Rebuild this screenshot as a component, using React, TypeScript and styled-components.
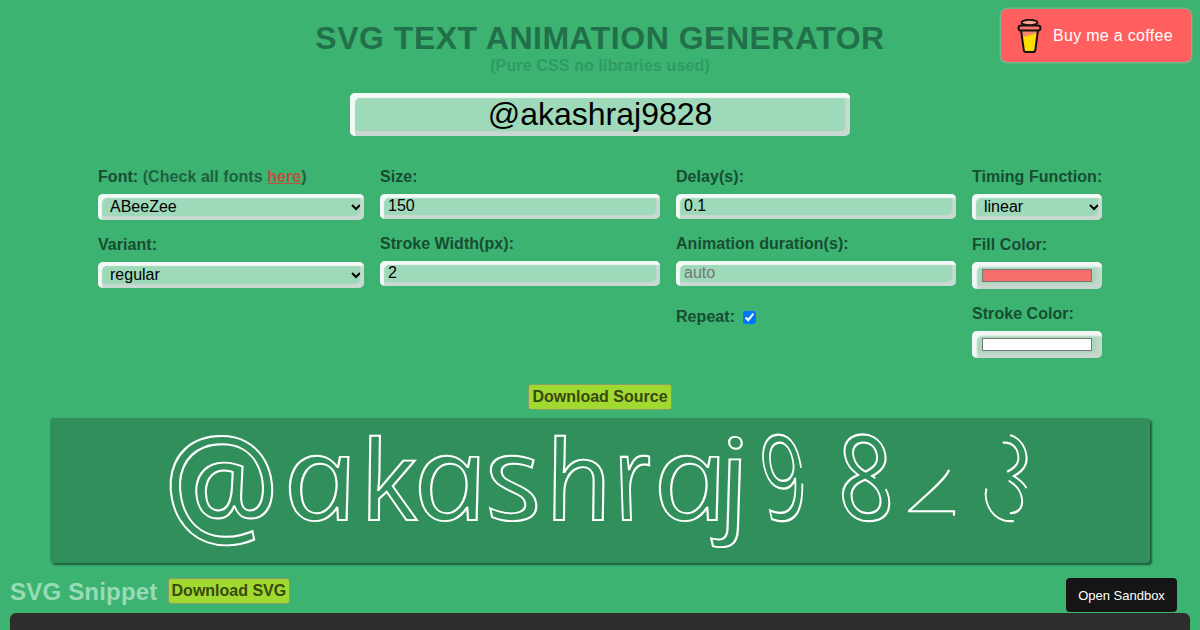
import React from "react";
import styled, { createGlobalStyle } from "styled-components";

const Global = createGlobalStyle`
  html, body { margin: 0; padding: 0; height: 630px; overflow: hidden; background: #3cb371; }
  body { font-family: "Liberation Sans", Arial, sans-serif; }
  * { box-sizing: border-box; }
`;

const Page = styled.div`
  position: relative;
  height: 630px;
  overflow: hidden;
  background: #3cb371;
  display: flex;
  flex-direction: column;
`;

const Header = styled.header`
  padding-top: 20px;
  text-align: center;
`;

const Title = styled.h1`
  margin: 0;
  font-size: 32px;
  line-height: 36px;
  font-weight: 700;
  letter-spacing: 0.5px;
  color: #22704a;
`;

const Subtitle = styled.div`
  margin-top: 1px;
  font-size: 16px;
  line-height: 18px;
  font-weight: 700;
  letter-spacing: 0.13px;
  color: #2f9a62;
`;

const Coffee = styled.a`
  position: absolute;
  top: 9px;
  left: 1001px;
  width: 190px;
  height: 53px;
  display: flex;
  align-items: center;
  gap: 10px;
  padding-left: 16px;
  background: #ff5f5f;
  border-radius: 6px;
  box-shadow: 0 0 0 1.5px rgba(190, 190, 190, 0.4);
  color: #fff;
  font-size: 16px;
  letter-spacing: 0.3px;
`;

const BevelStyle = `
  border: none;
  border-radius: 5px;
  background: #9edab9;
  box-shadow: inset 4px 4px 1px rgba(255, 255, 255, 0.85), inset -4px -4px 1px rgba(220, 215, 218, 0.7);
  font-family: "Liberation Sans", Arial, sans-serif;
  color: #000;
  outline: none;
`;

const MainInput = styled.input`
  ${BevelStyle}
  display: block;
  width: 500px;
  height: 43px;
  margin: 18px auto 0;
  font-size: 32px;
  text-align: center;
  padding: 0 6px;
  box-shadow: inset 5px 5px 1px rgba(255, 255, 255, 0.85), inset -5px -5px 1px rgba(220, 215, 218, 0.7);
`;

const Form = styled.div`
  margin: 32px auto 0;
  width: 1004px;
  display: grid;
  grid-template-columns: 266px 280px 280px 130px;
  column-gap: 16px;
`;

const Column = styled.div`
  display: flex;
  flex-direction: column;
  gap: 16px;
`;

const Field = styled.div`
  display: flex;
  flex-direction: column;
  gap: 8px;
`;

const Label = styled.label`
  font-size: 16px;
  line-height: 18px;
  font-weight: 700;
  color: #174d32;
  letter-spacing: 0.05px;
  white-space: nowrap;
`;

const Muted = styled.span`
  color: #1e6140;
`;

const HereLink = styled.a`
  color: #c0503f;
  text-decoration: underline;
`;

const Select = styled.select`
  ${BevelStyle}
  width: 100%;
  height: 26px;
  font-size: 16px;
  padding: 0 3px 2px 8px;
`;

const TextInput = styled.input`
  ${BevelStyle}
  width: 100%;
  height: 25px;
  font-size: 16px;
  padding: 0 8px 2px;
  &::placeholder { color: #757575; }
`;

const ColorInput = styled.input`
  ${BevelStyle}
  width: 130px;
  height: 27px;
  background: #a9d8bc;
  padding: 7px 10px;
  box-shadow: inset 5px 5px 2px rgba(255, 255, 255, 0.85), inset -5px -5px 3px rgba(220, 215, 218, 0.6);
  &::-webkit-color-swatch-wrapper { padding: 0; }
`;

const RepeatRow = styled.div`
  display: flex;
  align-items: center;
  gap: 8px;
  margin-top: 6px;
`;

const Check = styled.input`
  margin: 0;
  width: 13px;
  height: 13px;
`;

const GreenButton = styled.button`
  font-family: "Liberation Sans", Arial, sans-serif;
  font-size: 16px;
  font-weight: 700;
  color: #38490f;
  background: #a0d92f;
  border: 1px solid #8a9a6a;
  border-radius: 3px;
  padding: 0 3px;
  height: 26px;
  white-space: nowrap;
`;

const SourceRow = styled.div`
  margin-top: 26px;
  display: flex;
  justify-content: center;
`;

const Stage = styled.div`
  margin: 8px auto 0;
  width: 1100px;
  height: 145px;
  background: #318f5c;
  border-radius: 4px;
  box-shadow: 2px 2px 2px #1c5c3a;
`;

const StageSvg = styled.svg`
  display: block;
  overflow: visible;
`;

const SnippetRow = styled.div`
  margin-top: 15px;
  height: 34px;
  padding: 0 23px 0 10px;
  display: flex;
  align-items: flex-start;
  gap: 10px;
`;

const SnippetTitle = styled.h2`
  margin: 0;
  font-size: 24px;
  line-height: 28px;
  font-weight: 700;
  letter-spacing: 0.2px;
  color: #98dcb7;
`;

const Sandbox = styled.button`
  margin-left: auto;
  width: 111px;
  height: 34px;
  background: #151515;
  color: #fff;
  border: none;
  border-radius: 4px;
  font-family: "Liberation Sans", Arial, sans-serif;
  font-size: 13px;
`;

const CodeBlock = styled.div`
  margin: 1px 10px 0;
  flex: 1;
  background: #2d2d2d;
  border-radius: 6px 6px 0 0;
`;

const CupIcon = () => (
  <svg width="26" height="36" viewBox="0 0 26 36" fill="none">
    <path d="M4 13 L7 33 H18 L21 13 Z" fill="#ffdd00" />
    <path d="M4.5 13 L5.5 19 C10 18 14 17 20.3 15 L21 13 Z" fill="#f48a6a" />
    <path d="M4 12 L6.8 32 Q7 34 9 34 H16 Q18 34 18.3 32 L21 12" stroke="#1a1010" strokeWidth="2" />
    <rect x="1.5" y="7.5" width="22" height="5" rx="2.5" fill="#f4756a" stroke="#1a1010" strokeWidth="2" />
    <ellipse cx="12.5" cy="4.5" rx="8" ry="2.6" fill="#f9a58c" stroke="#1a1010" strokeWidth="1.8" />
  </svg>
);

const Glyph = styled.text`
  font-family: "Open Sans", sans-serif;
  font-style: italic;
  font-size: 118px;
  fill: none;
  stroke: #fff;
  stroke-width: 2px;
  vector-effect: non-scaling-stroke;
`;

const chars: { c: string; x: number; sx: number; sy?: number; dash?: string }[] = [
  { c: "a", x: 239, sx: 1.13 },
  { c: "k", x: 316, sx: 1, sy: 0.94 },
  { c: "a", x: 369, sx: 1.13 },
  { c: "s", x: 442, sx: 1.12 },
  { c: "h", x: 501, sx: 1, sy: 0.94 },
  { c: "r", x: 570, sx: 0.85 },
  { c: "a", x: 609, sx: 1.13 },
  { c: "j", x: 674, sx: 1.1, sy: 0.96 },
  { c: "9", x: 718, sx: 0.72, dash: "210 14 170 20" },
  { c: "8", x: 793, sx: 0.88, dash: "190 14 170 14" },
  { c: "2", x: 844, sx: 1.15, dash: "0 228 112 300" },
  { c: "8", x: 936, sx: 0.85, dash: "45 85 70 45 60 70" },
];

export default function App() {
  return (
    <Page>
      <Global />
      <Coffee>
        <CupIcon />
        Buy me a coffee
      </Coffee>
      <Header>
        <Title>SVG TEXT ANIMATION GENERATOR</Title>
        <Subtitle>(Pure CSS no libraries used)</Subtitle>
      </Header>
      <MainInput defaultValue="@akashraj9828" />
      <Form>
        <Column>
          <Field>
            <Label>
              Font: <Muted>(Check all fonts <HereLink>here</HereLink>)</Muted>
            </Label>
            <Select defaultValue="ABeeZee"><option>ABeeZee</option></Select>
          </Field>
          <Field>
            <Label>Variant:</Label>
            <Select defaultValue="regular"><option>regular</option></Select>
          </Field>
        </Column>
        <Column>
          <Field>
            <Label>Size:</Label>
            <TextInput defaultValue="150" />
          </Field>
          <Field>
            <Label>Stroke Width(px):</Label>
            <TextInput defaultValue="2" />
          </Field>
        </Column>
        <Column>
          <Field>
            <Label>Delay(s):</Label>
            <TextInput defaultValue="0.1" />
          </Field>
          <Field>
            <Label>Animation duration(s):</Label>
            <TextInput placeholder="auto" />
          </Field>
          <RepeatRow>
            <Label>Repeat:</Label>
            <Check type="checkbox" defaultChecked />
          </RepeatRow>
        </Column>
        <Column>
          <Field>
            <Label>Timing Function:</Label>
            <Select defaultValue="linear"><option>linear</option></Select>
          </Field>
          <Field>
            <Label>Fill Color:</Label>
            <ColorInput type="color" defaultValue="#f56f6c" />
          </Field>
          <Field>
            <Label>Stroke Color:</Label>
            <ColorInput type="color" defaultValue="#ffffff" />
          </Field>
        </Column>
      </Form>
      <SourceRow>
        <GreenButton>Download Source</GreenButton>
      </SourceRow>
      <Stage>
        <StageSvg width="1100" height="145">
          <Glyph transform="translate(122 115) skewX(12) scale(1.08 1.09)" style={{ fontSize: 125 }}>@</Glyph>
          {chars.map((g, i) => (
            <Glyph
              key={i}
              transform={`translate(${g.x} 102) skewX(12) scale(${g.sx} ${g.sy ?? 1})`}
              strokeDasharray={g.dash}
            >
              {g.c}
            </Glyph>
          ))}
        </StageSvg>
      </Stage>
      <SnippetRow>
        <SnippetTitle>SVG Snippet</SnippetTitle>
        <GreenButton>Download SVG</GreenButton>
        <Sandbox>Open Sandbox</Sandbox>
      </SnippetRow>
      <CodeBlock />
    </Page>
  );
}
